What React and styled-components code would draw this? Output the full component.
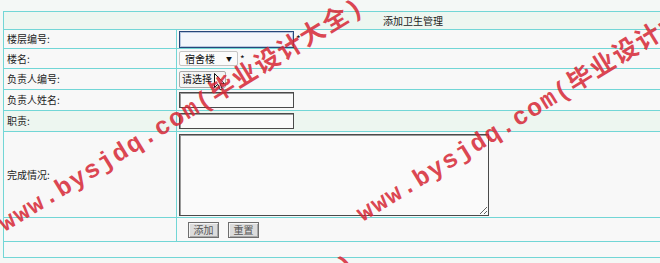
import React from 'react';
import styled, { createGlobalStyle } from 'styled-components';

const GlobalStyle = createGlobalStyle`
  html, body {
    margin: 0;
    padding: 0;
    background: #f4f8f6;
    overflow: hidden;
  }
  body {
    font-family: "Noto Sans CJK SC", "Liberation Sans", sans-serif;
  }
`;

const Page = styled.div`
  position: relative;
  width: 660px;
  height: 263px;
  overflow: hidden;
  padding: 11px 0 0 3px;
  box-sizing: border-box;
`;

const Table = styled.table`
  width: 820px;
  border-collapse: collapse;
  font-size: 10px;
  color: #222;
  table-layout: fixed;
`;

const LabelCol = styled.col`
  width: 173px;
`;

const Row = styled.tr`
  background: ${(props) => (props.tint ? '#edf6f0' : '#f8f8f8')};
`;

const Cell = styled.td`
  border: 1px solid #72d6d6;
  padding: 0 0 0 ${(props) => (props.pad === undefined ? 3 : props.pad)}px;
  height: ${(props) => props.h}px;
  text-align: ${(props) => (props.center ? 'center' : 'left')};
  vertical-align: middle;
  white-space: nowrap;
  line-height: 12px;
`;

const Field = styled.div`
  display: flex;
  align-items: center;
  gap: 2px;
  position: relative;
`;

const TextInput = styled.input`
  box-sizing: border-box;
  width: 115px;
  height: ${(props) => props.h || 16}px;
  margin: 0;
  padding: 0 2px;
  font: inherit;
  background: ${(props) => (props.focused ? '#f3f6fb' : '#fafafa')};
  border: 1px solid ${(props) => (props.focused ? '#27477a' : '#4a4a4a')};
  box-shadow: ${(props) =>
    props.focused ? 'inset 0 0 0 1px #b9c8e0' : 'inset 1px 1px 0 #9a9a9a'};
  outline: none;
`;

const Star = styled.span`
  font-size: 10px;
  line-height: 10px;
  color: #111;
`;

const SelectWrap = styled.span`
  position: relative;
  display: inline-block;
`;

const Select = styled.select`
  appearance: none;
  box-sizing: border-box;
  width: 59px;
  height: 15px;
  margin: 0;
  padding: 0 0 0 5px;
  font: inherit;
  font-size: 10px;
  color: #111;
  background: #fbfbfb;
  border: 1px solid #c4c4c4;
  border-radius: 2px;
  outline: none;
`;

const Arrow = styled.span`
  position: absolute;
  right: 6px;
  top: 3px;
  font-size: 6px;
  line-height: 9px;
  color: #111;
  pointer-events: none;
`;

const PickButton = styled.button`
  box-sizing: border-box;
  width: 47px;
  height: 17px;
  margin: 0;
  padding: 0 0 0 2px;
  text-align: left;
  font: inherit;
  font-size: 10px;
  color: #111;
  background: #f4f4f4;
  border: 1px solid #a9a9a9;
  border-radius: 2px;
`;

const Cursor = styled.svg`
  position: absolute;
  left: 35px;
  top: 2px;
`;

const TextArea = styled.textarea`
  box-sizing: border-box;
  display: block;
  width: 310px;
  height: 82px;
  margin: 0;
  padding: 2px;
  font: inherit;
  background: #fafafa;
  border: 1px solid #4a4a4a;
  box-shadow: inset 1px 1px 0 #9a9a9a;
  outline: none;
  resize: both;
`;

const Buttons = styled.div`
  display: flex;
  gap: 9px;
  padding-left: 9px;
`;

const ActionButton = styled.button`
  box-sizing: border-box;
  width: 31px;
  height: 16px;
  margin: 0;
  padding: 0;
  font: inherit;
  font-size: 10px;
  color: #555;
  background: #dcdcdc;
  border: 1px solid #6e6e6e;
  box-shadow: inset 1px 1px 0 #f4f4f4, inset -1px -1px 0 #a8a8a8;
`;

const Watermarks = styled.div`
  position: absolute;
  inset: 0;
  pointer-events: none;
`;

const Mark = styled.span`
  position: absolute;
  transform-origin: 0 100%;
  transform: rotate(-31.5deg);
  font-family: "Liberation Mono", "Noto Sans CJK SC", monospace;
  font-weight: bold;
  font-size: 25px;
  line-height: 25px;
  letter-spacing: 1.5px;
  white-space: nowrap;
  color: rgba(214, 38, 52, 0.85);
`;

const marks = [
  { left: 8, top: 212 },
  { left: 366, top: 202 },
  { left: 0, top: 468 },
  { left: 358, top: 458 },
];

const WATERMARK = 'www.bysjdq.com(毕业设计大全)';

export default function App() {
  return (
    <>
      <GlobalStyle />
      <Page>
        <Table>
          <colgroup>
            <LabelCol />
            <col />
          </colgroup>
          <tbody>
            <Row tint>
              <Cell colSpan={2} h={17} center pad={0}>添加卫生管理</Cell>
            </Row>
            <Row>
              <Cell h={18}>楼层编号:</Cell>
              <Cell h={18} pad={2}>
                <Field>
                  <TextInput h={17} focused />
                  <Star>*</Star>
                </Field>
              </Cell>
            </Row>
            <Row>
              <Cell h={19}>楼名:</Cell>
              <Cell h={19} pad={2}>
                <Field>
                  <SelectWrap>
                    <Select defaultValue="宿舍楼">
                      <option>宿舍楼</option>
                    </Select>
                    <Arrow>▼</Arrow>
                  </SelectWrap>
                  <Star>*</Star>
                </Field>
              </Cell>
            </Row>
            <Row>
              <Cell h={20}>负责人编号:</Cell>
              <Cell h={20} pad={2}>
                <Field>
                  <PickButton>请选择</PickButton>
                  <Cursor width="11" height="18" viewBox="0 0 11 18">
                    <path
                      d="M0.5 0.5 L0.5 14.5 L3.8 11.3 L6.2 16.8 L8.3 15.9 L6 10.6 L10.3 10.6 Z"
                      fill="#fff"
                      stroke="#111"
                      strokeWidth="1"
                      strokeLinejoin="round"
                    />
                  </Cursor>
                </Field>
              </Cell>
            </Row>
            <Row>
              <Cell h={20}>负责人姓名:</Cell>
              <Cell h={20} pad={2}>
                <Field>
                  <TextInput />
                </Field>
              </Cell>
            </Row>
            <Row tint>
              <Cell h={20}>职责:</Cell>
              <Cell h={20} pad={2}>
                <Field>
                  <TextInput />
                </Field>
              </Cell>
            </Row>
            <Row>
              <Cell h={85}>完成情况:</Cell>
              <Cell h={85} pad={2}>
                <TextArea />
              </Cell>
            </Row>
            <Row>
              <Cell h={23} />
              <Cell h={23} pad={2}>
                <Buttons>
                  <ActionButton>添加</ActionButton>
                  <ActionButton>重置</ActionButton>
                </Buttons>
              </Cell>
            </Row>
            <Row>
              <Cell colSpan={2} h={15} />
            </Row>
          </tbody>
        </Table>
        <Watermarks>
          {marks.map((m, i) => (
            <Mark key={i} style={{ left: m.left, top: m.top }}>
              {WATERMARK}
            </Mark>
          ))}
        </Watermarks>
      </Page>
    </>
  );
}
